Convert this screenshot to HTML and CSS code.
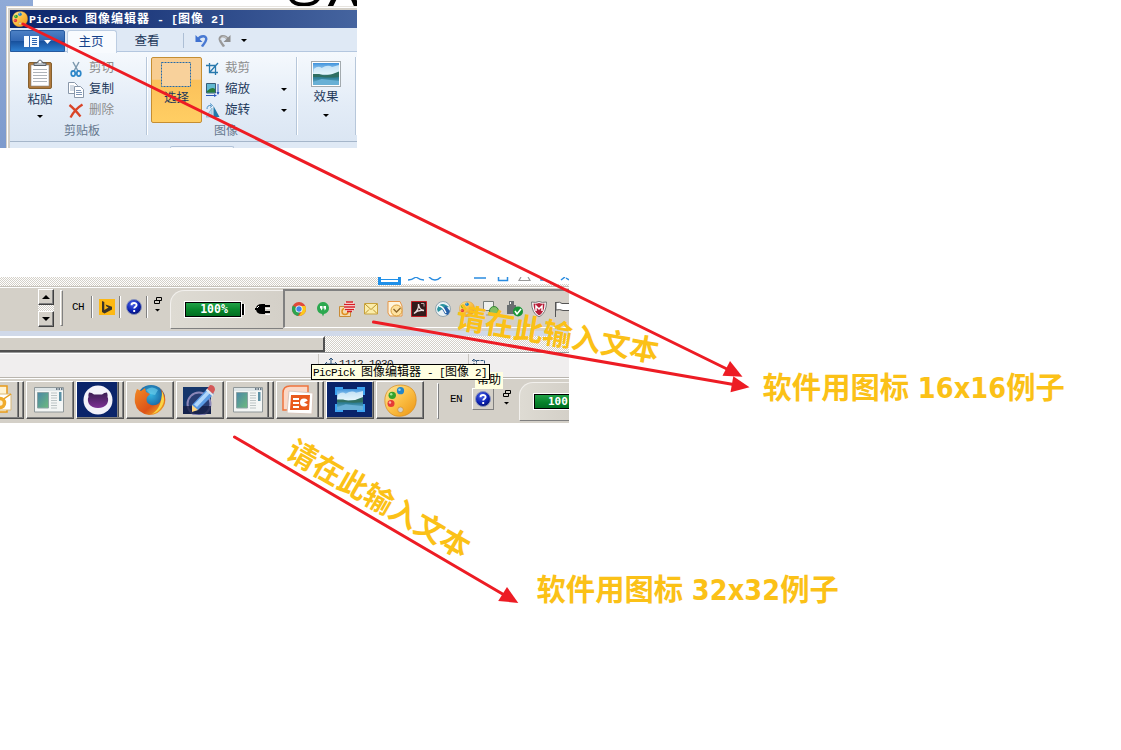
FILE: index.html
```html
<!DOCTYPE html>
<html lang="zh-CN">
<head>
<meta charset="utf-8">
<title>软件用图标</title>
<link rel="stylesheet" href="styles.css">
</head>
<body>
<svg class="defs" width="0" height="0" aria-hidden="true">
  <defs>
    <linearGradient id="gold" x1="0" y1="0" x2="1" y2="1"><stop offset="0" stop-color="#ffe9a0"/><stop offset=".5" stop-color="#fbbf45"/><stop offset="1" stop-color="#ec9412"/></linearGradient>
    <linearGradient id="sky" x1="0" y1="0" x2="0" y2="1"><stop offset="0" stop-color="#3f93dc"/><stop offset=".5" stop-color="#d8f1fb"/><stop offset=".52" stop-color="#3a7f86"/><stop offset=".68" stop-color="#2d7f97"/><stop offset="1" stop-color="#7fc0e6"/></linearGradient>
    <linearGradient id="pane" x1="0" y1="0" x2="1" y2="1"><stop offset="0" stop-color="#4b86a8"/><stop offset="1" stop-color="#6dbb7c"/></linearGradient>
    <linearGradient id="violet" x1="0" y1="0" x2="0" y2="1"><stop offset="0" stop-color="#3b1d52"/><stop offset="1" stop-color="#7d3194"/></linearGradient>
    <radialGradient id="navyball" cx=".4" cy=".3" r=".8"><stop offset="0" stop-color="#4a63e8"/><stop offset=".6" stop-color="#0a1fae"/><stop offset="1" stop-color="#03105c"/></radialGradient>
    <radialGradient id="fox" cx=".5" cy=".35" r=".6"><stop offset="0" stop-color="#35b4e0"/><stop offset="1" stop-color="#114a8c"/></radialGradient>
    <linearGradient id="flame" x1="0" y1="0" x2="1" y2="1"><stop offset="0" stop-color="#f18a25"/><stop offset=".6" stop-color="#dd5318"/><stop offset="1" stop-color="#f7c52c"/></linearGradient>
  </defs>
  <symbol id="palette" viewBox="0 0 32 32">
    <path d="M16 1C7 1 .8 7 .8 16S7 31 14 31.300C22 32 31 26 31.200 16S25 1 16 1Z" fill="url(#gold)" stroke="#d88a18" stroke-width=".7"/>
    <circle cx="16" cy="25" r="2.700" fill="#d4d0c8" stroke="#d08a20" stroke-width=".6"/>
    <circle cx="16" cy="6.500" r="3.500" fill="#2486c8"/><circle cx="15" cy="5.500" r="1.200" fill="#9cd5f2"/>
    <circle cx="8" cy="11" r="3.600" fill="#35a32c"/><circle cx="7" cy="10" r="1.200" fill="#a4e393"/>
    <circle cx="6.800" cy="19" r="3.400" fill="#e53a36"/><circle cx="5.800" cy="18" r="1.200" fill="#ffb3a6"/>
  </symbol>
  <symbol id="help" viewBox="0 0 16 16">
    <circle cx="8" cy="8" r="7.500" fill="url(#navyball)" stroke="#8b95bb" stroke-width="1"/>
    <path d="M5.500 6.200C5.500 3.300 10.600 3.300 10.600 6C10.600 7.700 8.200 7.800 8.200 9.600M8.200 11v2" fill="none" stroke="#fff" stroke-width="1.900"/>
  </symbol>
  <symbol id="restore" viewBox="0 0 8 16">
    <path d="M2.500.500h5v3h-5zM.500 3.500h5v3h-5z" fill="none" stroke="#000"/>
    <path d="M1 12h5L3.500 14.500z"/>
  </symbol>
  <symbol id="appwin" viewBox="0 0 30 26">
    <path d="M.500.500h29v24.500h-29z" fill="#f4f6f5" stroke="#90989a"/><path d="M1 1h28v3H1z" fill="#dfe6e8"/>
    <path d="M22 2h1.500M24.500 2H26M27 2h1.500" stroke="#456" stroke-width="1.500"/>
    <path d="M3.500 5.500h11V21h-11z" fill="url(#pane)" stroke="#8aa2a4"/>
    <path d="M17 6h6M17 8.500h6M17 11h6M17 13.500h6M17 16h6M17 18.500h6M17 21h6" stroke="#bcc4c5"/>
    <path d="M25 5h2.500v9H25z" fill="#5b91a5"/>
  </symbol>
  <symbol id="photo" viewBox="0 0 30 22" preserveAspectRatio="none">
    <path d="M0 0h30v22H0z" fill="url(#sky)"/><path d="M1 6q5-4 9-1q7-4 12-1l8-2v8l-10 2H1z" fill="#e4f4fb" opacity=".75"/>
    <path d="M0 11l7 0 6 1.500 8-1 9-3v5.500q-12 1-20 0L0 14z" fill="#2f6f62"/><path d="M0 19l10-3 20 2v4H0z" fill="#68b0d5"/>
  </symbol>
</svg>

<main class="canvas">
  <section class="editor">
    <div class="desktop"></div>
    <div class="big-text"><svg width="72" height="7" viewBox="0 0 72 7"><path d="M4-1C8 6.500 26 6.500 31-1" fill="none" stroke="#000" stroke-width="4"/><path d="M43 7L47-1M70 7L66-2" stroke="#000" stroke-width="5"/></svg></div>
    <div class="window">
      <div class="titlebar">
        <svg class="title-icon" width="16" height="16"><use href="#palette"/></svg>
        <div class="line"><span class="lat">PicPick&nbsp;</span><span class="han">图像编辑器</span><span class="lat">&nbsp;-&nbsp;[</span><span class="han">图像</span><span class="lat">&nbsp;2]</span></div>
      </div>
      <div class="tabs">
        <div class="file-tab">
          <svg width="28" height="11" viewBox="0 0 28 11"><path d="M0 0h15v11H0z" fill="#f6fbff"/><path d="M5.500 0v11" stroke="#2c61ac"/><path d="M8 2.500h5M8 4.500h5M8 6.500h5M8 8.500h5" stroke="#2b65b0"/><path d="M20 4h7l-3.500 4z" fill="#fff"/></svg>
        </div>
        <div class="tab active">主页</div>
        <div class="tab">查看</div>
        <div class="quick">
          <svg width="13" height="13" viewBox="0 0 13 13"><path d="M3 5.500C5 1.500 12 1 11.200 5.500C10.700 8.500 8.500 10 7 12.500" fill="none" stroke="#4a7ad2" stroke-width="2.400"/><path d="M.500 1v7h7z" fill="#3f71d0"/></svg>
          <svg width="13" height="13" viewBox="0 0 13 13"><path d="M10 5.500C8 1.500 1 1 1.800 5.500C2.300 8.500 4.500 10 6 12.500" fill="none" stroke="#999" stroke-width="2.400"/><path d="M12.500 1v7h-7z" fill="#8f8f8f"/><path d="M9 4.500C7 2 2.500 2.500 2.500 6" fill="none" stroke="#ddd" stroke-width=".8"/></svg>
          <i class="caret"></i>
        </div>
      </div>
      <div class="ribbon">
        <div class="group clip">
          <div class="group-body">
            <div class="paste">
              <svg width="26" height="31" viewBox="0 0 26 31"><rect x="1.500" y="3.500" width="23" height="26" rx="1.500" fill="#b07a3c" stroke="#85602f"/><path d="M4 6h18v21H4z" fill="#fff" stroke="#8c8c8c" stroke-width=".6"/><path d="M6 10.500h14M6 13.500h14M6 16.500h14M6 19.500h14M6 22.500h14" stroke="#aeb4ba"/><path d="M7 6.500V4h3q3-6 6 0h3v2.500z" fill="#b6bdc4" stroke="#596068"/><circle cx="13" cy="3" r="1.200" fill="#fff"/></svg>
              <span>粘贴</span><i class="caret"></i>
            </div>
            <ul class="cmds">
              <li class="off"><svg width="16" height="16" viewBox="0 0 16 16"><path d="M5 1l5 9M11 1L6 10" stroke="#7c98ae" stroke-width="1.500"/><ellipse cx="5.200" cy="12.500" rx="2" ry="2.600" fill="none" stroke="#2c86c8" stroke-width="1.700"/><ellipse cx="10.800" cy="12.500" rx="2" ry="2.600" fill="none" stroke="#2c86c8" stroke-width="1.700"/></svg>剪切</li>
              <li><svg width="16" height="16" viewBox="0 0 16 16"><path d="M.500.500h6l3 3v8h-9z" fill="#fff" stroke="#8997a9"/><path d="M2 4h4M2 6h5M2 8h5" stroke="#a9b8ca"/><path d="M6.500 4.500h6l3 3v8h-9z" fill="#fff" stroke="#8997a9"/><path d="M8 8.500h5M8 10.500h6M8 12.500h6" stroke="#7d95b5"/></svg>复制</li>
              <li class="off"><svg width="16" height="16" viewBox="0 0 16 16"><path d="M1.500 2q5 4 11 11.500M14.500 1.500Q7 6 2.500 14.500" fill="none" stroke="#d94427" stroke-width="2.300"/></svg>删除</li>
            </ul>
          </div>
          <div class="caption">剪贴板</div>
        </div>
        <div class="group image">
          <div class="group-body">
            <div class="select"><svg width="30" height="25" viewBox="0 0 30 25"><path d="M.500.500h29v24h-29z" fill="#f8d19b" stroke="#256aa9" stroke-dasharray="2 1"/></svg><span>选择</span></div>
            <ul class="cmds wide">
              <li class="off"><svg width="14" height="16" viewBox="0 0 14 16"><path d="M3.500 2v9.500H12M0 4.500h9.500V14M3.500 11.500L12 2" fill="none" stroke="#2879ad" stroke-width="1.300"/></svg>裁剪</li>
              <li><svg width="14" height="16" viewBox="0 0 14 16"><path d="M.500 1.500h9v9.500h-9z" fill="#62b8d2" stroke="#385d78"/><path d="M1 9q5-5 8-2v3.500H1z" fill="#287b38"/><path d="M0 13.500h10M12 2v10" stroke="#2b57bb"/><path d="M8 12l3 1.500L8 15zM10.500 10l1.500 3 1.500-3z" fill="#2b57bb"/></svg>缩放<i class="caret"></i></li>
              <li><svg width="14" height="16" viewBox="0 0 14 16"><path d="M6 5v9H0z" fill="#b9dced" stroke="#7aafd0" stroke-width=".7"/><path d="M7.500 3v11h6z" fill="#2279aa"/><path d="M1 6q0-4 4-3.500M4 .500l2.500 2L4 4.500" fill="none" stroke="#4c93c7"/></svg>旋转<i class="caret"></i></li>
            </ul>
          </div>
          <div class="caption">图像</div>
        </div>
        <div class="group effect">
          <svg class="framed" width="26" height="22"><use href="#photo"/></svg>
          <span>效果</span><i class="caret"></i>
        </div>
      </div>
      <div class="below"><i></i></div>
    </div>
  </section>

  <section class="taskbars">
    <div class="cut-row">
      <div class="cut-blue"><i></i></div>
      <svg width="168" height="7" viewBox="0 0 168 7"><path d="M7 3q4 0 8-3q4 3 8 3M28 0q6 6 12 0M73 1h12M97.500 0v3.500h9V0M140 0v3h4M160 3l4-3M165 1l3 2" fill="none" stroke="#2a8ce0" stroke-width="1.500"/><path d="M120 0l-2 3.500h11l-2-3.500" fill="none" stroke="#999" stroke-width="1.200"/></svg>
    </div>
    <div class="tray-row">
      <div class="spinner"><b><i class="up"></i></b><em></em><b><i class="down"></i></b></div>
      <i class="grip"></i>
      <span class="lang">CH</span>
      <i class="sep"></i>
      <svg class="bing" width="16" height="16" viewBox="0 0 16 16"><path d="M0 0h16v16H0z" fill="#fdb813"/><path d="M3 2l2.300 1v8l4.200-2.500-2-1L6.500 5.500l6.500 2.300v2.700L5.500 14.500 3 13z" fill="#3b3428"/></svg>
      <i class="sep"></i>
      <svg class="ball" width="16" height="16"><use href="#help"/></svg>
      <i class="sep"></i>
      <svg class="rest" width="8" height="16"><use href="#restore"/></svg>
      <div class="power">
        <div class="battery">100%</div><i class="nub"></i>
        <svg width="16" height="12" viewBox="0 0 16 12"><path d="M1 6q0-5 6-5h3v10H7Q1 11 1 6z"/><path d="M0 6h3M9 3h6M9 9h6" stroke="#000" stroke-width="2.200"/><path d="M10.500 5.500H15M10.500 11.500H15M4 3L2 5" stroke="#fff"/></svg>
      </div>
      <div class="tray">
        <svg viewBox="0 0 16 16"><circle cx="8" cy="8" r="7" fill="#e14a39"/><path d="M1.900 4.500A7 7 0 0 0 7 15l3-6z" fill="#2ca44f"/><path d="M8 15a7 7 0 0 0 6.300-10H8l3 5z" fill="#fbc91c"/><circle cx="8" cy="8" r="3.500" fill="#fff"/><circle cx="8" cy="8" r="2.700" fill="#4285e8"/></svg>
        <svg viewBox="0 0 16 16"><path d="M2 7a6 6 0 1 1 7 6l-1 2.500-1-2.500a6 6 0 0 1-5-6z" fill="#2ca84f"/><path d="M5 5h2.500v3L6 9.500V7.500H5zM8.500 5H11v3L9.500 9.500V7.500h-1z" fill="#fff"/></svg>
        <svg viewBox="0 0 16 16"><path d="M.500 5.500h11v10H.500z" fill="#f3dcb0" stroke="#c98b36"/><circle cx="6" cy="10.500" r="3" fill="none" stroke="#df8f21" stroke-width="1.500"/><circle cx="10.500" cy="5.500" r="5.500" fill="#fff"/><path d="M7 1h7M5 3.500h11M5 6h11M6 8.500h9M8 10.500h5" stroke="#d51d23" stroke-width="1.700"/></svg>
        <svg viewBox="0 0 16 16"><path d="M1.500 2.500h13v10.500h-13z" fill="#fbedaa" stroke="#c8a23c"/><path d="M2 3l6 5.500L14 3M2 12.500l4-4M14 12.500l-4-4" fill="none" stroke="#bd952e"/></svg>
        <svg viewBox="0 0 16 16"><path d="M1 .500h12L15 5v10H3L1 12z" fill="#fff4dc" stroke="#e79647"/><circle cx="9.500" cy="9.500" r="5.500" fill="#ffe2a1" stroke="#d99d38"/><path d="M6.500 8l3 3 4-4" fill="none" stroke="#8a6428" stroke-width="1.300"/></svg>
        <svg viewBox="0 0 16 16"><path d="M.500.500h15v15H.500z" fill="#331b1b" stroke="#c51f25"/><path d="M3 12.500Q8 9 7.500 3Q8 9 13 9.500Q7 8.500 3 12.500" fill="none" stroke="#eadddd" stroke-width="1.300"/><path d="M10 2.500h3v3" fill="none" stroke="#b9a5a5"/></svg>
        <svg viewBox="0 0 16 16"><circle cx="8" cy="8" r="7.500" fill="#e9f1f4" stroke="#94a6ae"/><path d="M2 8Q5 1 11 4l3 2-5 1-6 4z" fill="#2b94a0"/><path d="M7 8l4-3 4 5-2 4-3-1z" fill="#245fa6"/><path d="M4 5Q8 5 11 12" fill="none" stroke="#fff" stroke-width="1.300"/></svg>
        <svg viewBox="0 0 32 32"><use href="#palette"/></svg>
        <svg viewBox="0 0 16 16"><path d="M.500.500h10v9h-10z" fill="#eff1ef" stroke="#747b77"/><circle cx="11" cy="10" r="4.500" fill="#83bf65" stroke="#348735"/><path d="M3 14h5" stroke="#999"/></svg>
        <svg viewBox="0 0 16 16"><path d="M2 0h5v4H2zM0 4h9v9H0z" fill="#696e70"/><path d="M3 1h1v2H3z" fill="#fff"/><circle cx="11" cy="10.500" r="5" fill="#199636"/><path d="M8 10l2 3 4-5" fill="none" stroke="#fff" stroke-width="1.600"/></svg>
        <svg viewBox="0 0 16 16"><path d="M.500 1q4.500 1 7.500-.5q3 1.500 7.500.5q0 11-7.500 15Q.500 12 .500 1z" fill="#fff" stroke="#777"/><path d="M2.500 2.500q3 .5 5.500-.5q2.500 1 5.500.5q0 9-5.500 12Q2.500 11 2.500 2.500z" fill="#b7203a"/><path d="M5 10V5l3 3 3-3v5" fill="none" stroke="#fff" stroke-width="1.500"/></svg>
        <svg viewBox="0 0 16 16"><path d="M.500 1v15M1 1.500q4-1 6 1h8v7H8Q5 8 1 9z" fill="#fff" stroke="#555"/></svg>
      </div>
    </div>
    <div class="blue-strip"></div>
    <div class="scroll-row"><div class="thumb"></div></div>
    <div class="status">
      <div class="coords"><svg width="12" height="13" viewBox="0 0 12 13"><path d="M6 0v13M0 6h12M4 2l2-2 2 2M2 4L0 6l2 2M10 4l2 2-2 2" fill="none" stroke="#31567c"/></svg><span>1112,1030</span></div>
      <div class="size"><svg width="13" height="12" viewBox="0 0 13 12"><path d="M2 0v12M0 2l2-2 2 2M4.500 1.500h8v9h-8z" fill="none" stroke="#31567c" stroke-dasharray="3 1"/></svg></div>
    </div>
    <div class="apps">
      <div class="task first stacked"><svg width="15" height="30" viewBox="0 0 15 30"><path d="M-1 1h8v26h-8z" fill="#fff3d4" stroke="#e79a1a" stroke-width="1.500"/><path d="M-1 9h12v16H-1z" fill="#fff" stroke="#d9b978"/><path d="M-1 17l12-8" stroke="#e79f20" stroke-width="1.500"/><circle cx="0" cy="18" r="4.500" fill="#fff3d4" stroke="#f0ab2c" stroke-width="3.500"/></svg></div>
      <div class="task app"><svg width="30" height="26"><use href="#appwin"/></svg></div>
      <div class="task navy stacked"><svg width="30" height="30" viewBox="0 0 30 30"><circle cx="15" cy="15" r="14.500" fill="#f3f2fa"/><path d="M6 7.500q3 0 5 2h8q2-2 5-2q1 3 .500 4.500Q26 15 24 19Q21 23 15 23T6 19Q4 15 5.500 12Q5 10 6 7.500z" fill="url(#violet)"/></svg></div>
      <div class="task"><svg width="32" height="32" viewBox="0 0 32 32"><circle cx="17" cy="15" r="14" fill="url(#fox)"/><path d="M12 6q6-5 12 0l-3 5-5-1z" fill="#73d3ee" opacity=".6"/><path d="M3 5l4 2 4-3 1 4 4 2-3 3q-2 6 4 8q6 1 9-3Q30 10 26 4Q34 13 30 22Q25 31 15 31Q3 29 1 19Q0 11 3 5z" fill="url(#flame)"/><path d="M28 7q5 10-2 18q-3 4-8 5q10-6 10-23z" fill="#fad645"/></svg></div>
      <div class="task"><svg width="34" height="30" viewBox="0 0 34 30"><path d="M0 2h28v27H0z" fill="#15366b"/><circle cx="16" cy="19" r="11.500" fill="#283d73" stroke="#8b87b8" stroke-width="2"/><path d="M0 21h28v8H0z" fill="#151e45" opacity=".8"/><path d="M9 20L25 3l6 6-16 16-6 1z" fill="#5b9ae3"/><path d="M11 19.500L26 4l3 2-15 16z" fill="#afd6fb"/><path d="M9 20l6 5-6 2z" fill="#ffd681"/><path d="M24 4l3-4q5 0 5 5l-2 4z" fill="#d45858"/><path d="M23.500 4.500l6.500 6" stroke="#e5e7ea" stroke-width="2"/></svg></div>
      <div class="task stacked"><svg width="30" height="26"><use href="#appwin"/></svg></div>
      <div class="task stacked ppt"><svg width="32" height="30" viewBox="0 0 32 30"><path d="M1 8q0-7 7-7h18v24H1z" fill="#fbd8c6" stroke="#ef733d" stroke-width="1.500"/><path d="M7 6l24 2-1 21-25-1z" fill="#fff" stroke="#d9c8be"/><path d="M9 10h19l-1 15H8z" fill="#e95a1d"/><path d="M11 14h6M11 18h6M11 22h6" stroke="#fff" stroke-width="2"/><circle cx="22" cy="17.500" r="4" fill="#fff"/><path d="M22 17.500l4-2v4z" fill="#e95a1d"/></svg></div>
      <div class="task navy last"><svg width="30" height="26" viewBox="0 0 30 26"><path d="M1 8V1h7M22 1h7v7M29 17v7h-7M8 24H1v-7" fill="none" stroke="#3da3f0" stroke-width="2"/><use href="#photo" x="2" y="2" width="26" height="21"/></svg></div>
      <div class="task"><svg width="33" height="33"><use href="#palette"/></svg></div>
      <i class="grip"></i>
      <span class="lang">EN</span>
      <div class="helpbtn"><svg width="16" height="16"><use href="#help"/></svg></div>
      <svg class="rest" width="8" height="16"><use href="#restore"/></svg>
      <div class="power cut"><div class="battery">100</div></div>
    </div>
    <div class="tip small">帮助</div>
    <div class="tip"><div class="line"><span class="lat">PicPick&nbsp;</span><span class="han">图像编辑器</span><span class="lat">&nbsp;-&nbsp;[</span><span class="han">图像</span><span class="lat">&nbsp;2]</span></div></div>
  </section>

  <svg class="arrows" width="1121" height="750" viewBox="0 0 1121 750">
    <g fill="none" stroke="#ed1c24" stroke-width="3" stroke-linecap="round"><path d="M23 24L730 370.500"/><path d="M373.500 322L735 384.800"/><path d="M234.500 437L506 596"/></g>
    <g fill="#ed1c24"><path d="M742.500 376.700L722.500 375.700L730 361z"/><path d="M749.500 387.300L730.500 392.200L733.300 376.300z"/><path d="M518.300 602.900L498.200 601L507 587z"/></g>
  </svg>
  <div class="note n16">软件用图标 <span>16x16</span>例子</div>
  <div class="note n32">软件用图标 <span>32x32</span>例子</div>
  <div class="note along shallow">请在此输入文本</div>
  <div class="note along steep">请在此输入文本</div>
</main>
</body>
</html>
```
FILE: styles.css
```css
* { box-sizing: border-box; }
body { margin: 0; background: #fff; font-family: "Liberation Sans", "Noto Sans CJK SC", sans-serif; font-size: 12px; overflow: hidden; }
i, em { font-style: normal; }
ul { list-style: none; margin: 0; padding: 0; }
svg { display: block; flex: none; }
.defs { position: absolute; }
.canvas { position: relative; width: 1121px; height: 750px; overflow: hidden; }
.line { white-space: nowrap; }
.lat { font-family: "Liberation Mono", monospace; white-space: pre; }
.han { font-family: "Noto Sans CJK SC", sans-serif; }

/* Ribbon editor window */
.editor { position: absolute; left: 0; top: 0; width: 357px; height: 148px; overflow: hidden; background: linear-gradient(#8faad7, #7e9bcd); padding: 6px 0 0 6px; }
.desktop { position: absolute; left: 33px; top: 0; width: 324px; height: 7px; background: #fff; }
.big-text { position: absolute; left: 287px; top: 0; }
.window { position: relative; height: 142px; padding: 3px 0 0 3px; background: #d4d0c8; border-top: 1px solid #e7e4df; border-left: 1px solid #d4d0c8; box-shadow: inset 1px 1px #fff; }
.titlebar { display: flex; align-items: center; height: 18px; padding-left: 2px; background: linear-gradient(90deg, #0a246a, #45649f); color: #fff; font-weight: 700; line-height: 18px; }
.title-icon { margin-right: 1px; }
.titlebar .line { height: 18px; line-height: 16px; }
.titlebar .lat { font-size: 11.67px; }
.titlebar .han { font-size: 12px; letter-spacing: 1px; }
.tabs { display: flex; height: 24px; padding-top: 2px; background: #dfe9f5; border-bottom: 1px solid #b4c7df; color: #1e395b; }
.file-tab { width: 55px; padding: 5px 0 0 13px; background: linear-gradient(#4c80c4, #3268b4 48%, #174f9b 50%, #2e7fd0); border: 1px solid #265a9f; border-radius: 2px 2px 0 0; height: 22px; }
.tab { width: 60px; height: 22px; line-height: 22px; text-align: center; font-size: 12.500px; }
.tab.active { width: 50px; margin-left: 2px; height: 23px; background: #f8fbfe; border: 1px solid #bccde2; border-bottom: 0; border-radius: 3px 3px 0 0; color: #15428b; }
.tab.active { padding-right: 2px; }
.quick { display: flex; align-items: center; height: 15px; margin: 3px 0 0 6px; padding-left: 11px; gap: 10px; border-left: 1px solid #adbfd5; }
.caret { display: block; width: 0; height: 0; border: 3px solid transparent; border-top-color: #000; border-bottom: 0; }
.ribbon { display: flex; height: 90px; background: linear-gradient(#f5f9fd, #e3ecf7 60%, #dbe6f3); border-bottom: 1px solid #a5b6ca; color: #1e395b; line-height: 15px; }
.group { margin-top: 5px; height: 78px; border-right: 1px solid #b7c7da; box-shadow: 1px 0 #fff; }
.group-body { display: flex; height: 66px; }
.clip { width: 137px; }
.image { width: 150px; padding-left: 4px; }
.effect { display: flex; flex-direction: column; align-items: center; width: 59px; padding-top: 4px; }
.framed { border: 1px solid #a3aaae; width: 30px; height: 26px; padding: 1px; background: #fff; }
.effect span { font-size: 12.500px; margin-top: 3px; }
.effect .caret { margin-top: 9px; }
.paste { width: 58px; padding-left: 2px; padding-top: 2px; display: flex; flex-direction: column; align-items: center; }
.paste span { margin-top: 3px; font-size: 12.500px; }
.paste .caret { margin-top: 7px; }
.cmds { padding-top: 1px; }
.cmds li { display: flex; align-items: center; height: 21px; gap: 5px; width: 74px; font-size: 12.500px; }
.cmds .off { color: #8d8d8d; }
.wide { padding-left: 4px; }
.wide li { width: 88px; }
.wide .caret { margin-left: auto; margin-right: 7px; }
.caption { font-size: 12px; line-height: 16px; color: #66788f; text-align: center; padding-left: 8px; }
.select { display: flex; flex-direction: column; align-items: center; width: 51px; height: 66px; padding-top: 4px; border: 1px solid #c58e32; border-radius: 2px; background: linear-gradient(#f8cd91 0 33%, #fbc15b 35%, #ffce63); }
.select span { margin-top: 4px; font-size: 12.500px; }
.select svg { margin-right: 2px; }
.image .caption { padding-left: 5px; }
.below { height: 6px; background: #dfe9f5; padding: 4px 0 0 160px; }
.below i { display: block; width: 64px; height: 2px; background: #f5f8fc; border: 1px solid #b0c2d9; border-bottom: 0; border-radius: 3px 3px 0 0; }

/* Stacked taskbars */
.taskbars { position: absolute; left: 0; top: 277px; width: 569px; height: 146px; overflow: hidden; background: #d4d0c8; }
.cut-row { display: flex; height: 10px; padding-left: 378px; background: repeating-conic-gradient(#d4d0c8 0 25%, #fff 0 50%) 0 0 / 2px 2px; border-bottom: 1px solid #c5c1b9; }
.cut-blue { width: 23px; height: 8px; padding: 0 3px; background: #2090e8; }
.cut-blue i { display: block; height: 5px; background: linear-gradient(#fff 0 40%, #2090e8 40% 60%, #fff 60%); }
.cut-row svg { background: #fff; }
.tray-row { display: flex; height: 44px; padding-left: 38px; border-top: 1px solid #fff; }
.spinner { width: 16px; margin-top: 1px; }
.spinner b { display: flex; align-items: center; justify-content: center; height: 16px; background: #d4d0c8; border: 1px solid; border-color: #fff #404040 #404040 #fff; box-shadow: inset -1px -1px #808080; }
.spinner em { display: block; height: 6px; background: repeating-conic-gradient(#d4d0c8 0 25%, #fff 0 50%) 0 0 / 2px 2px; }
.up, .down { border: 4px solid transparent; border-bottom-color: #000; border-top: 0; }
.down { border-top: 4px solid #000; border-bottom: 0; }
.grip { width: 3px; height: 36px; background: #d4d0c8; border: 1px solid; border-color: #fff #808080 #808080 #fff; margin: 2px 0 0 6px; }
.lang { font-family: "Liberation Mono", monospace; font-size: 11px; letter-spacing: -.6px; width: 12px; }
.tray-row .lang { margin: 13px 7px 0 9px; }
.sep { width: 2px; height: 22px; margin-top: 8px; border-left: 1px solid #808080; border-right: 1px solid #fff; }
.bing { margin: 11px 4px 0 6px; }
.ball { margin: 11px 4px 0 5px; }
.rest { margin: 9px 0 0 6px; }
.power { display: flex; width: 113px; height: 39px; margin: 2px 0 0 8px; padding: 11px 0 0 13px; border-top: 1px solid #f2f0ed; border-left: 1px solid #f2f0ed; border-bottom: 1px solid #808080; border-radius: 14px 0 0 0; background: linear-gradient(90deg, #dedbd3, #d4d0c8); }
.battery { width: 58px; height: 17px; margin-top: -1px; border: 1px solid #fff; outline: 1px solid #000; outline-offset: -2px; background: linear-gradient(#25a64b, #06832a 55%, #006b20); color: #fff; font-family: "DejaVu Sans Mono", monospace; font-size: 11.500px; font-weight: 700; line-height: 15px; text-align: center; padding-left: 2px; }
.nub { width: 3px; height: 11px; margin-top: 2px; background: #000; border-right: 1px solid #fff; }
.power > svg { margin: 1px 0 0 10px; }
.tray { display: flex; gap: 8px; width: 286px; height: 39px; margin-top: 1px; padding: 10px 0 0 6px; border-top: 2px solid #808080; border-left: 2px solid #808080; border-bottom: 1px solid #fff; overflow: hidden; }
.tray svg { width: 16px; height: 16px; }
.blue-strip { height: 5px; background: #d0d9e9; }
.scroll-row { height: 17px; background: repeating-conic-gradient(#d4d0c8 0 25%, #fff 0 50%) 0 0 / 2px 2px; border-bottom: 1px solid #999; }
.thumb { width: 325px; height: 16px; background: #d4d0c8; border-top: 2px solid #fff; border-right: 2px solid #505050; border-bottom: 2px solid #505050; }
.status { display: flex; height: 25px; background: #f0eeee; border-top: 1px solid #fff; border-bottom: 1px solid #b9b5ae; color: #222; }
.coords { display: flex; width: 151px; margin-left: 318px; padding: 4px 0 0 6px; border-left: 1px solid #c9c6c2; border-right: 1px solid #c9c6c2; }
.coords span { margin-left: 2px; font: 11px/12px "Liberation Mono", monospace; letter-spacing: -.6px; }
.size { padding: 5px 0 0 3px; }
.apps { display: flex; height: 45px; padding-top: 2px; border-top: 1px solid #fff; gap: 2px; }
.task { display: flex; align-items: center; justify-content: center; width: 48px; height: 38px; flex: none; border: 1px solid; border-color: #fff #505050 #505050 #fff; box-shadow: inset -1px -1px #808080; }
.app { padding-right: 2px; }
.stacked { box-shadow: inset -1px -1px #808080, inset -4px 0 #d4d0c8, inset -5px 0 #505050, inset -6px 0 #808080; }
.stacked svg { margin-right: 4px; }
.navy { background: #0a246a; }
.first { width: 24px; border-left: 0; justify-content: flex-start; }
.apps .grip { margin: 2px 0 0 11px; }
.apps .lang { margin: 12px 8px 0 9px; }
.helpbtn { width: 22px; height: 22px; margin-top: 7px; padding: 2px; border: 1px solid; border-color: #fff #808080 #808080 #fff; }
.apps .rest { margin: 9px 0 0 7px; }
.power.cut { margin: 1px 0 0 6px; width: 50px; flex: none; overflow: hidden; }
.cut .battery { width: 70px; flex: none; text-align: left; padding-left: 14px; font-size: 11px; }
.tip { position: absolute; left: 311px; top: 87px; width: 179px; height: 16px; padding-left: 1px; border: 1px solid #000; background: #ffffe1; color: #000; line-height: 13px; }
.tip .line { height: 13px; line-height: 11px; }
.tip .lat { font-size: 11px; letter-spacing: -.6px; }
.tip .han { font-size: 12px; }
.tip.small { left: 475px; top: 95px; width: 28px; height: 17px; border: 0; line-height: 17px; padding-left: 2px; }

/* Callouts */
.arrows { position: absolute; left: 0; top: 0; }
.note { position: absolute; font-family: "Noto Sans CJK SC", sans-serif; font-weight: 700; font-size: 29.33px; line-height: 40px; color: #fbc117; white-space: pre; }
.note span { font-family: "DejaVu Sans Condensed", "DejaVu Sans", sans-serif; font-stretch: condensed; font-size: 28.500px; margin: 0 0 0 2px; letter-spacing: .1px; }
.n16 { left: 762.500px; top: 365px; }
.n32 { left: 536.500px; top: 567px; }
.along { width: 206px; text-align: center; transform-origin: 50% 50%; }
.shallow { left: 454.500px; top: 312px; transform: rotate(9.800deg); }
.steep { left: 276.500px; top: 477px; transform: rotate(29.900deg); }
```
